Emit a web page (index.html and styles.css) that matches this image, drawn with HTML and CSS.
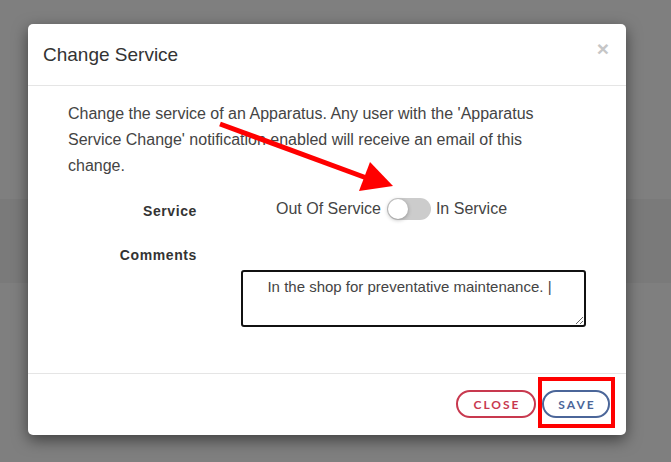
FILE: index.html
```html
<!DOCTYPE html>
<html>
<head>
<meta charset="utf-8">
<link rel="stylesheet" href="styles.css">
</head>
<body>
<div class="page">
  <div class="band"></div>
  <div class="modal">
    <div class="modal-header">
      <h4 class="modal-title">Change Service</h4>
      <span class="close">&times;</span>
    </div>
    <div class="modal-body">
      <p class="intro">Change the service of an Apparatus. Any user with the 'Apparatus Service Change' notification enabled will receive an email of this change.</p>
      <div class="form-row service-row">
        <label class="label">Service</label>
        <div class="control toggle-group">
          <span>Out Of Service</span>
          <span class="switch"><span class="knob"></span></span>
          <span>In Service</span>
        </div>
      </div>
      <div class="form-row comments-row">
        <label class="label">Comments</label>
        <div class="control textarea-wrap">
          <textarea class="comments">In the shop for preventative maintenance. |</textarea>
        </div>
      </div>
    </div>
    <div class="modal-footer">
      <button class="btn btn-close">CLOSE</button>
      <span class="save-wrap">
        <button class="btn btn-save">SAVE</button>
        <span class="highlight"></span>
      </span>
    </div>
  </div>
  <svg class="arrow" width="671" height="462" viewBox="0 0 671 462">
    <line x1="220" y1="124" x2="372" y2="180" stroke="#ff0000" stroke-width="5"/>
    <polygon points="393,186 359,191 370,162" fill="#ff0000"/>
  </svg>
</div>
</body>
</html>
```

FILE: styles.css
```css
html, body {
  margin: 0;
  padding: 0;
}
body {
  background: #7f7f7f;
  font-family: "Liberation Sans", Arial, sans-serif;
  width: 671px;
  height: 462px;
  overflow: hidden;
}
.page {
  position: relative;
  width: 671px;
  height: 462px;
  padding-top: 24px;
  box-sizing: border-box;
}
.band {
  position: absolute;
  left: 0;
  top: 199px;
  width: 671px;
  height: 84px;
  background: #7a7a7a;
}
.modal {
  position: relative;
  margin-left: 28px;
  width: 598px;
  background: #fff;
  border-radius: 5px;
  box-shadow: 0 5px 15px rgba(0, 0, 0, 0.5);
}
.modal-header {
  display: flex;
  justify-content: space-between;
  align-items: flex-start;
  padding: 20px 17px 20px 15px;
  border-bottom: 1px solid #e5e5e5;
}
.modal-title {
  margin: 0;
  font-size: 19px;
  font-weight: normal;
  line-height: 21px;
  color: #333;
}
.close {
  font-size: 21px;
  font-weight: bold;
  line-height: 1;
  color: #c6c6c6;
  margin-top: -6px;
}
.modal-body {
  padding: 15px 50px 46px 40px;
  color: #444;
  font-size: 16px;
}
.intro {
  margin: 0;
  line-height: 26px;
}
.form-row {
  display: grid;
  grid-template-columns: 129px 1fr;
  column-gap: 44px;
}
.label {
  text-align: right;
  font-size: 14px;
  font-weight: bold;
  letter-spacing: 0.6px;
  color: #333;
}
.service-row {
  margin-top: 19px;
  align-items: center;
  height: 22px;
}
.service-row .label {
  padding-top: 3px;
}
.toggle-group {
  display: flex;
  align-items: center;
  padding-left: 35px;
  font-size: 16px;
  color: #444;
}
.switch {
  position: relative;
  display: inline-block;
  width: 44px;
  height: 22px;
  border-radius: 11px;
  background: #cccccc;
  margin: 0 5px 0 6px;
}
.knob {
  position: absolute;
  left: 1px;
  top: 1px;
  width: 20px;
  height: 20px;
  border-radius: 50%;
  background: #fff;
  box-shadow: 0 1px 4px rgba(0, 0, 0, 0.3);
}
.comments-row {
  margin-top: 25px;
}
.comments-row .label {
  line-height: 20px;
}
.textarea-wrap {
  padding-top: 25px;
}
.comments {
  display: block;
  width: 345px;
  height: 57px;
  box-sizing: border-box;
  border: 2px solid #111;
  border-radius: 3px;
  padding: 5px 8px 5px 0;
  font-family: "Liberation Sans", Arial, sans-serif;
  font-size: 15px;
  line-height: 20px;
  color: #444;
  text-align: center;
  resize: vertical;
  outline: none;
}
.modal-footer {
  display: flex;
  justify-content: flex-end;
  align-items: center;
  gap: 6px;
  padding: 16px 16px 17px 16px;
  border-top: 1px solid #e5e5e5;
}
.btn {
  height: 28px;
  box-sizing: border-box;
  border-radius: 14px;
  background: #fff;
  font-family: Lato, "Liberation Sans", sans-serif;
  font-size: 12px;
  font-weight: bold;
  letter-spacing: 2px;
  padding: 0 0 0 2px;
  cursor: pointer;
}
.btn-close {
  width: 80px;
  border: 2px solid #c8394f;
  color: #c8394f;
}
.btn-save {
  width: 68px;
  border: 2px solid #4b6699;
  color: #4b6699;
}
.save-wrap {
  position: relative;
  display: inline-block;
  height: 28px;
}
.highlight {
  position: absolute;
  left: -4px;
  top: -13px;
  right: -5px;
  bottom: -10px;
  border: 4px solid #ff0000;
  box-sizing: border-box;
}
.arrow {
  position: absolute;
  left: 0;
  top: 0;
  pointer-events: none;
}
```
